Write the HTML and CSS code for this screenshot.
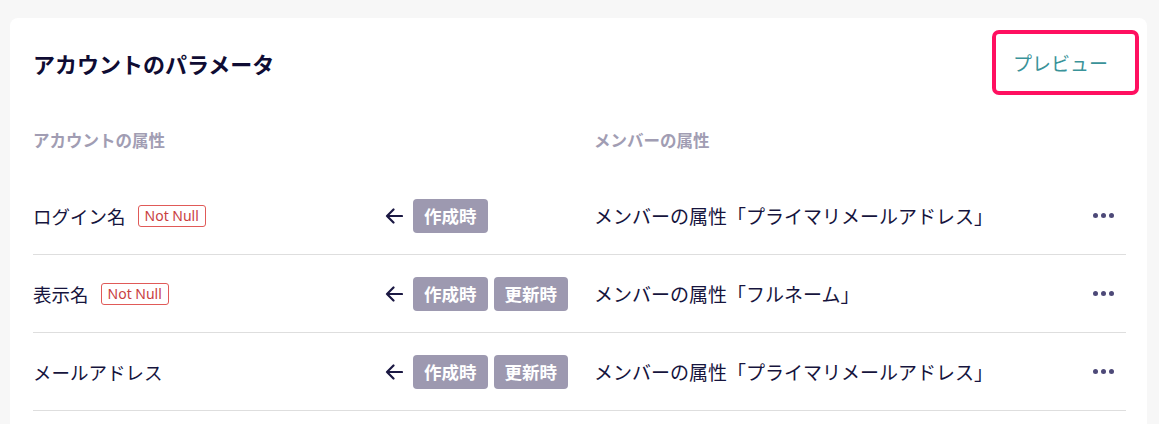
FILE: index.html
```html
<!DOCTYPE html>
<html lang="ja">
<head>
  <meta charset="UTF-8" />
  <title>アカウントのパラメータ</title>
  <link rel="stylesheet" href="styles.css">
</head>
<body>
  <div class="card">
    <div class="card-header">
      <h2>アカウントのパラメータ</h2>
      <div class="highlight">
        <button class="preview">プレビュー</button>
      </div>
    </div>

    <div class="table">
      <div class="row head">
        <div>アカウントの属性</div>
        <div></div>
        <div>メンバーの属性</div>
        <div></div>
      </div>

      <div class="row">
        <div class="name">ログイン名 <span class="not-null">Not Null</span></div>
        <div class="sync">
          <svg class="arrow" width="18" height="16" viewBox="0 0 18 16"><path d="M17 8H2M8.5 1.5L2 8l6.5 6.5" fill="none" stroke="#1b1843" stroke-width="2.2" stroke-linecap="round" stroke-linejoin="round"/></svg>
          <span class="tag">作成時</span>
        </div>
        <div class="member">メンバーの属性「プライマリメールアドレス」</div>
        <div class="more"><i></i><i></i><i></i></div>
      </div>

      <div class="row">
        <div class="name">表示名 <span class="not-null">Not Null</span></div>
        <div class="sync">
          <svg class="arrow" width="18" height="16" viewBox="0 0 18 16"><path d="M17 8H2M8.5 1.5L2 8l6.5 6.5" fill="none" stroke="#1b1843" stroke-width="2.2" stroke-linecap="round" stroke-linejoin="round"/></svg>
          <span class="tag">作成時</span>
          <span class="tag">更新時</span>
        </div>
        <div class="member">メンバーの属性「フルネーム」</div>
        <div class="more"><i></i><i></i><i></i></div>
      </div>

      <div class="row">
        <div class="name">メールアドレス</div>
        <div class="sync">
          <svg class="arrow" width="18" height="16" viewBox="0 0 18 16"><path d="M17 8H2M8.5 1.5L2 8l6.5 6.5" fill="none" stroke="#1b1843" stroke-width="2.2" stroke-linecap="round" stroke-linejoin="round"/></svg>
          <span class="tag">作成時</span>
          <span class="tag">更新時</span>
        </div>
        <div class="member">メンバーの属性「プライマリメールアドレス」</div>
        <div class="more"><i></i><i></i><i></i></div>
      </div>
    </div>
  </div>
</body>
</html>
```

FILE: styles.css
```css
* {
  margin: 0;
  padding: 0;
  box-sizing: border-box;
  font-family: 'Noto Sans CJK JP', 'Noto Sans', sans-serif;
}

body {
  background: #f7f7f7;
  padding: 18px 12px 0 10px;
  height: 424px;
  overflow: hidden;
}

.card {
  background: #fff;
  border-radius: 8px;
  padding: 12px 21px 0 23px;
  height: 420px;
}

.card-header {
  display: flex;
  justify-content: space-between;
  align-items: center;
  height: 65px;
}

h2 {
  font-size: 22px;
  font-weight: 700;
  color: #0f0c33;
}

.highlight {
  border: 4px solid #ff1060;
  border-radius: 7px;
  height: 65px;
  margin-right: -13px;
  display: flex;
  align-items: center;
  padding: 0 27px 0 17px;
}

.preview {
  border: none;
  background: none;
  color: #3a9399;
  font-size: 19px;
  cursor: pointer;
}

.table {
  margin-top: 33px;
}

.row {
  display: grid;
  grid-template-columns: 352px 209px 1fr auto;
  align-items: center;
  height: 78px;
  border-bottom: 1px solid #dedede;
  font-size: 18.5px;
  color: #16143d;
}

.row.head {
  height: 24px;
  border-bottom: none;
  margin-bottom: 25px;
  font-size: 16.5px;
  font-weight: 700;
  color: #a19db3;
}

.name {
  display: flex;
  align-items: center;
}

.member {
  font-size: 19px;
}

.not-null {
  margin-left: 12px;
  font-family: 'Noto Sans', sans-serif;
  font-size: 14px;
  color: #c9403f;
  border: 1px solid #e05a58;
  border-radius: 3px;
  padding: 0 6px;
  height: 22px;
  line-height: 20px;
}

.sync {
  display: flex;
  align-items: center;
  gap: 6px;
}

.arrow {
  margin-right: 4px;
}

.tag {
  background: #9d99b0;
  color: #fff;
  font-size: 17.5px;
  font-weight: 700;
  border-radius: 4px;
  height: 34px;
  line-height: 34px;
  padding: 0 11px;
}

.more {
  display: flex;
  gap: 3px;
  padding-right: 12px;
}

.more i {
  width: 5px;
  height: 5px;
  border-radius: 50%;
  background: #4d4978;
}
```
